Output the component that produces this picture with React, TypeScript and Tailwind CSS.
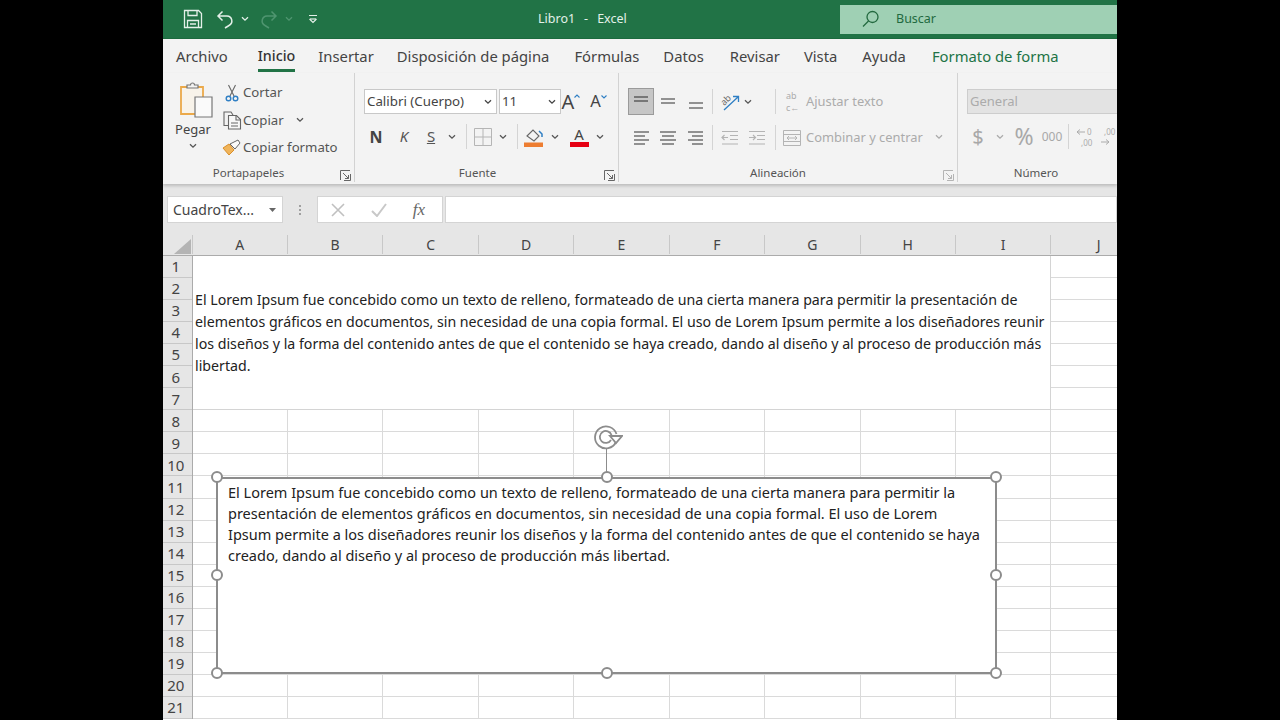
import type { ReactNode } from 'react'

const Chev = ({ c = '#555' }: { c?: string }) => (
  <svg width="8" height="6" viewBox="0 0 8 6" fill="none" stroke={c} strokeWidth="1.3" className="shrink-0"><path d="M1 1.2l3 3 3-3" /></svg>
)

// fixed width cell inside a ribbon row
const Slot = ({ w, children, className = '' }: { w: number; children?: ReactNode; className?: string }) => (
  <div style={{ width: w }} className={`flex shrink-0 items-center justify-center ${className}`}>{children}</div>
)

const Sep = () => <div className="h-[25px] w-px shrink-0 bg-[#d4d4d4]" />

const Launcher = ({ c = '#666' }: { c?: string }) => (
  <svg width="11" height="11" viewBox="0 0 11 11" fill="none" stroke={c}>
    <path d="M.5 10V.5H10" /><path d="M3 3l5.5 5.5M8.5 5v3.5H5" /><path d="M10.5 4v6.5H4" />
  </svg>
)

const Lines = ({ rows, c = '#666' }: { rows: [number, number, number][]; c?: string }) => (
  <svg width="18" height="18" viewBox="0 0 18 18" stroke={c} strokeWidth="1.4">
    {rows.map(([y, a, b]) => <path key={y} d={`M${a} ${y}H${b}`} />)}
  </svg>
)

const Indent = ({ flip }: { flip?: boolean }) => (
  <svg width="18" height="16" viewBox="0 0 18 16" fill="none" stroke="#b4b4b4" strokeWidth="1.2">
    <path d="M1 1.5h16M9 5.5h8M9 9.5h8M1 14h16" />
    {flip ? <path d="M1 7.5h6M5 5l2.5 2.5L5 10" /> : <path d="M7 7.5H1M3.5 5L1 7.5 3.5 10" />}
  </svg>
)

const tabs: [string, number, string?][] = [
  ['Archivo', 13], ['Inicio', 30], ['Insertar', 23], ['Disposición de página', 23], ['Fórmulas', 25],
  ['Datos', 24], ['Revisar', 26], ['Vista', 24], ['Ayuda', 25], ['Formato de forma', 26, 'text-[#217346]'],
]

const sheetText = [
  'El Lorem Ipsum fue concebido como un texto de relleno, formateado de una cierta manera para permitir la presentación de',
  'elementos gráficos en documentos, sin necesidad de una copia formal. El uso de Lorem Ipsum permite a los diseñadores reunir',
  'los diseños y la forma del contenido antes de que el contenido se haya creado, dando al diseño y al proceso de producción más',
  'libertad.',
]

const boxText = [
  'El Lorem Ipsum fue concebido como un texto de relleno, formateado de una cierta manera para permitir la',
  'presentación de elementos gráficos en documentos, sin necesidad de una copia formal. El uso de Lorem',
  'Ipsum permite a los diseñadores reunir los diseños y la forma del contenido antes de que el contenido se haya',
  'creado, dando al diseño y al proceso de producción más libertad.',
]

const Handle = ({ className }: { className: string }) => (
  <div className={`absolute h-[12px] w-[12px] rounded-full border-2 border-[#8c8c8c] bg-white ${className}`} />
)

function TitleBar() {
  return (
    <div className="flex h-[39px] shrink-0 items-center border-b border-[#1c6a3e] bg-[#217346] text-white">
      <div className="flex w-[677px] shrink-0 items-center pl-[7px]">
        <Slot w={46}>
          <svg width="20" height="20" viewBox="0 0 20 20" fill="none" stroke="#e4f0e9" strokeWidth="1.3">
            <path d="M1.5 1.5h14l3 3v14h-17z" /><path d="M5 1.5v5h9v-5M4.5 18.500V11.500h11v7M7 15h6" />
          </svg>
        </Slot>
        <Slot w={18}>
          <svg width="18" height="19" viewBox="0 0 18 19" fill="none" stroke="#e4f0e9" strokeWidth="1.5">
            <path d="M6.5 1.5L2 6l4.500 4.500M2 6h9a5 5 0 0 1 2 9.500L9 18" />
          </svg>
        </Slot>
        <Slot w={22}><Chev c="#e4f0e9" /></Slot>
        <Slot w={26}>
          <svg width="18" height="19" viewBox="0 0 18 19" fill="none" stroke="#4f9570" strokeWidth="1.5">
            <path d="M11.500 1.500L16 6l-4.500 4.500M16 6H7a5 5 0 0 0-2 9.500L9 18" />
          </svg>
        </Slot>
        <Slot w={14}><Chev c="#4f9570" /></Slot>
        <Slot w={34}>
          <svg width="10" height="10" viewBox="0 0 10 10" fill="none" stroke="#e4f0e9" strokeWidth="1.2">
            <path d="M1 1.5h8M1.500 5L5 8.500 8.500 5" /><path d="M2 5h6" />
          </svg>
        </Slot>
        <div className="pl-[208px] text-[12.5px] text-[#e3f1e9]">
          <span>Libro1</span><span className="ml-[9px]">-</span><span className="ml-[9px]">Excel</span>
        </div>
      </div>
      <div className="flex h-[29px] flex-1 items-center bg-[#9fd0b4] text-[#1f6a40]">
        <svg width="18" height="18" viewBox="0 0 18 18" fill="none" stroke="#23693f" strokeWidth="1.3" className="ml-[22px]">
          <circle cx="10.5" cy="7" r="5.5" /><path d="M6.500 11L1 16.500" />
        </svg>
        <span className="ml-[16px] text-[12.5px]">Buscar</span>
      </div>
    </div>
  )
}

function Tabs() {
  return (
    <div className="flex h-[34px] shrink-0 items-start bg-[#f3f3f3] text-[14.8px] text-[#444]">
      {tabs.map(([name, gap, color]) => (
        <div key={name} style={{ marginLeft: gap }} className={`relative mt-[6px] leading-[22px] ${color ?? ''} ${name === 'Inicio' ? 'text-[14.3px] font-medium text-[#333]' : ''}`}>
          {name}
          {name === 'Inicio' && <div className="absolute right-0 bottom-[-5px] left-0 h-[3px] bg-[#217346]" />}
        </div>
      ))}
    </div>
  )
}

function Group({ w, label, labelPad = 0, launcher, children }: { w: number; label: string; labelPad?: number; launcher?: string; children: ReactNode }) {
  return (
    <div style={{ width: w }} className="relative mb-[2px] flex shrink-0 flex-col border-r border-[#d2d2d2] last:border-r-0">
      <div className="h-[92px]">{children}</div>
      <div style={{ paddingRight: labelPad }} className="mt-[1px] text-center text-[11.5px] leading-[18px] text-[#555]">{label}</div>
      {launcher && <div className="absolute right-[3px] bottom-[1px]"><Launcher c={launcher} /></div>}
    </div>
  )
}

function Clipboard() {
  return (
    <Group w={192} label="Portapapeles" labelPad={20} launcher="#666">
      <div className="flex pt-[9px]">
        <div className="ml-[11px] flex w-[38px] flex-col items-center">
          <svg width="34" height="36" viewBox="0 0 34 36" fill="none" className="ml-[6px]">
            <path d="M2 5h22v27H2z" fill="#f8f3ea" stroke="#eba94a" strokeWidth="1.8" />
            <path d="M8 6V3h3.500a2 2 0 0 1 4 0H19v3z" fill="#f3f3f3" stroke="#777" strokeWidth="1.2" />
            <path d="M16 15h17v20H16z" fill="#fafafa" stroke="#777" strokeWidth="1.2" />
          </svg>
          <div className="mt-[2px] text-[13px] leading-[18px] text-[#444]">Pegar</div>
          <div className="mt-[5px]"><Chev /></div>
        </div>
        <div className="mt-[-3px] ml-[9px] flex flex-col text-[13.2px] leading-[27.5px] text-[#555]">
          <div className="flex items-center">
            <Slot w={22}>
              <svg width="14" height="18" viewBox="0 0 14 18" fill="none">
                <path d="M3.500 1L9 12M10.500 1L5 12" stroke="#666" strokeWidth="1.1" />
                <circle cx="3.5" cy="14.5" r="2.3" stroke="#2f7fc4" strokeWidth="1.4" />
                <circle cx="10.5" cy="14.5" r="2.3" stroke="#2f7fc4" strokeWidth="1.4" />
              </svg>
            </Slot>
            <span>Cortar</span>
          </div>
          <div className="flex items-center">
            <Slot w={22}>
              <svg width="19" height="19" viewBox="0 0 19 19" fill="none" stroke="#666" strokeWidth="1.1">
                <path d="M5 14.500H1V1h7l2 3" /><path d="M5.500 4.500h8l4 4V18h-12z" fill="#f8f8f8" /><path d="M13 4.500V9h4.500M8 12h7M8 15h7" />
              </svg>
            </Slot>
            <span>Copiar</span>
            <span className="ml-[12px]"><Chev /></span>
          </div>
          <div className="flex items-center">
            <Slot w={22}>
              <svg width="20" height="18" viewBox="0 0 20 18" fill="none">
                <path d="M1 9l6 7 5-5-5-6z" fill="#f0b45a" stroke="#d98f2a" />
                <path d="M8 5l5 5 5-6-2-3z" fill="#fafafa" stroke="#666" />
              </svg>
            </Slot>
            <span>Copiar formato</span>
          </div>
        </div>
      </div>
    </Group>
  )
}

function FontGroup() {
  return (
    <Group w={264} label="Fuente" labelPad={18} launcher="#666">
      <div className="mt-[16px] flex h-[25px] items-center pl-[9px]">
        <div className="flex h-[25px] w-[133px] items-center justify-between border border-[#c8c8c8] bg-white pr-[4px] pl-[2px] text-[13.3px] text-[#444]">
          Calibri (Cuerpo)<Chev c="#444" />
        </div>
        <div className="ml-[2px] flex h-[25px] w-[62px] items-center justify-between border border-[#c8c8c8] bg-white pr-[4px] pl-[2px] text-[13.3px] text-[#444]">
          11<Chev c="#444" />
        </div>
        <Slot w={20}>
          <span className="text-[20px] leading-none text-[#444]">A</span>
          <svg width="6" height="4" viewBox="0 0 6 4" fill="none" stroke="#2f7fc4" strokeWidth="1.1" className="mb-[11px] shrink-0"><path d="M.5 3.500L3 1l2.500 2.500" /></svg>
        </Slot>
        <Slot w={19} className="ml-[8px]">
          <span className="text-[16.5px] leading-none text-[#444]">A</span>
          <svg width="6" height="4" viewBox="0 0 6 4" fill="none" stroke="#2f7fc4" strokeWidth="1.1" className="mb-[10px] shrink-0"><path d="M.5.500L3 3 5.500.500" /></svg>
        </Slot>
      </div>
      <div className="mt-[10px] flex h-[25px] items-center pl-[7px]">
        <Slot w={28} className="text-[16px] font-bold text-[#444]">N</Slot>
        <Slot w={28} className="text-[15px] text-[#555] italic">K</Slot>
        <Slot w={26} className="text-[15px] text-[#555] underline">S</Slot>
        <Slot w={16}><Chev /></Slot>
        <Slot w={12}><Sep /></Slot>
        <Slot w={22}>
          <svg width="18" height="18" viewBox="0 0 18 18" fill="none" stroke="#b5b5b5"><path d="M.5.500h17v17H.5zM9 .500v17M.5 9h17" /></svg>
        </Slot>
        <Slot w={18}><Chev /></Slot>
        <Slot w={10}><Sep /></Slot>
        <Slot w={24}>
          <svg width="20" height="20" viewBox="0 0 20 20" fill="none">
            <path d="M3 9l6-6 6 6-5 5z" stroke="#666" strokeWidth="1.1" /><path d="M15 4l3 3v3" stroke="#2f7fc4" strokeWidth="1.5" />
            <path d="M0 15.500h19V20H0z" fill="#ed7d31" />
          </svg>
        </Slot>
        <Slot w={18}><Chev /></Slot>
        <Slot w={30}>
          <div className="flex flex-col items-center">
            <span className="text-[15px] leading-[15px] text-[#444]">A</span>
            <div className="h-[5px] w-[19px] bg-[#e60012]" />
          </div>
        </Slot>
        <Slot w={12}><Chev /></Slot>
      </div>
    </Group>
  )
}

function AlignGroup() {
  return (
    <Group w={339} label="Alineación" labelPad={20} launcher="#b4b4b4">
      <div className="mt-[15px] flex h-[27px] items-center pl-[9px]">
        <Slot w={26} className="h-[27px] border border-[#9a9a9a] bg-[#c6c6c6]">
          <Lines rows={[[4, 2, 16], [8, 2, 16]]} c="#555" />
        </Slot>
        <Slot w={28}><Lines rows={[[6, 2, 16], [10, 2, 16]]} /></Slot>
        <Slot w={28}><Lines rows={[[10, 2, 16], [15, 2, 16]]} /></Slot>
        <Slot w={4}><Sep /></Slot>
        <Slot w={30}>
          <svg width="21" height="21" viewBox="0 0 21 21" fill="none" className="overflow-visible">
            <text x="1" y="11" fontSize="9" fill="#666" fontFamily="Noto Sans" transform="rotate(-45 8 8)">ab</text>
            <path d="M5 19L19 6M14 5.500h5.500V11" stroke="#2f7fc4" strokeWidth="1.3" />
          </svg>
        </Slot>
        <Slot w={8}><Chev /></Slot>
        <Slot w={2} className="ml-[22px]"><Sep /></Slot>
        <div className="ml-[10px] flex items-center text-[12.9px] text-[#ababab]">
          <div className="w-[20px] text-[9px] leading-[12px]">ab<br />c←</div>
          <span>Ajustar texto</span>
        </div>
      </div>
      <div className="mt-[10px] flex h-[25px] items-center pl-[9px]">
        <Slot w={26}><Lines rows={[[3, 2, 17], [7, 2, 13], [11, 2, 17], [15, 2, 13]]} /></Slot>
        <Slot w={28}><Lines rows={[[3, 1, 17], [7, 3, 15], [11, 1, 17], [15, 3, 15]]} /></Slot>
        <Slot w={28}><Lines rows={[[3, 1, 16], [7, 5, 16], [11, 1, 16], [15, 5, 16]]} /></Slot>
        <Slot w={4}><Sep /></Slot>
        <Slot w={32}><Indent /></Slot>
        <Slot w={22}><Indent flip /></Slot>
        <Slot w={2} className="ml-[6px]"><Sep /></Slot>
        <Slot w={18} className="ml-[7px]">
          <svg width="18" height="18" viewBox="0 0 18 18" fill="none" stroke="#b4b4b4"><path d="M.5 1.500h17v15H.5zM.5 5.500h17M.5 12.500h17M4 9h10M6 7L4 9l2 2M12 7l2 2-2 2" /></svg>
        </Slot>
        <div className="ml-[5px] flex items-center text-[12.9px] text-[#ababab]">
          Combinar y centrar<span className="ml-[12px]"><Chev c="#ababab" /></span>
        </div>
      </div>
    </Group>
  )
}

function NumberGroup() {
  return (
    <Group w={160} label="Número" labelPad={4}>
      <div className="mt-[16px] ml-[9px] flex h-[25px] w-[170px] items-center border border-[#cdcdcd] bg-[#e3e3e3] pl-[2px] text-[13px] text-[#ababab]">General</div>
      <div className="mt-[10px] flex h-[25px] items-center text-[#a8a8a8]">
        <Slot w={40} className="text-[20px]">$</Slot>
        <Slot w={4}><Chev c="#ababab" /></Slot>
        <Slot w={44} className="text-[23px]">%</Slot>
        <Slot w={12} className="text-[12px]">000</Slot>
        <Slot w={20}><Sep /></Slot>
        <Slot w={16}>
          <svg width="20" height="20" viewBox="0 0 20 20" fill="none" stroke="#ababab" className="shrink-0 overflow-visible"><path d="M9 5H1M4 2.500L1 5l3 2.500" /><text x="11" y="8" fontSize="8" stroke="none" fill="#ababab">0</text><text x="5" y="19" fontSize="8" stroke="none" fill="#ababab">,00</text></svg>
        </Slot>
        <Slot w={32}>
          <svg width="20" height="20" viewBox="0 0 20 20" fill="none" stroke="#ababab" className="shrink-0"><path d="M1 15h8M6 12.500L9 15l-3 2.500" /><text x="4" y="8" fontSize="8" stroke="none" fill="#ababab">,00</text></svg>
        </Slot>
      </div>
    </Group>
  )
}

function FormulaBar() {
  return (
    <div className="flex h-[51px] shrink-0 items-start bg-[#e6e6e6] pt-[12px]">
      <div className="ml-[4px] flex h-[27px] w-[116px] items-center justify-between border border-[#d4d4d4] bg-white pr-[6px] pl-[5px] text-[14px] text-[#444]">
        CuadroTex...
        <svg width="7" height="4" viewBox="0 0 7 4" fill="#666"><path d="M0 0h7L3.500 4z" /></svg>
      </div>
      <div className="flex h-[27px] w-[34px] flex-col items-center justify-center gap-[2px]">
        <i className="h-[2px] w-[2px] bg-[#a0a0a0]" /><i className="h-[2px] w-[2px] bg-[#a0a0a0]" /><i className="h-[2px] w-[2px] bg-[#a0a0a0]" />
      </div>
      <div className="flex h-[27px] w-[126px] items-center border border-[#d4d4d4] bg-white">
        <Slot w={40}>
          <svg width="14" height="14" viewBox="0 0 14 14" stroke="#c0c0c0" strokeWidth="1.6"><path d="M1 1l12 12M13 1L1 13" /></svg>
        </Slot>
        <Slot w={42}>
          <svg width="16" height="14" viewBox="0 0 16 14" fill="none" stroke="#c8c8c8" strokeWidth="2"><path d="M1 8l5 5 9-12" /></svg>
        </Slot>
        <Slot w={38} className="font-['Liberation_Serif',serif] text-[17px] text-[#666] italic">fx</Slot>
      </div>
      <div className="ml-[2px] h-[27px] flex-1 border border-[#d4d4d4] bg-white" />
    </div>
  )
}

function Sheet() {
  const cols = ['A', 'B', 'C', 'D', 'E', 'F', 'G', 'H', 'I', 'J']
  const rows = Array.from({ length: 21 }, (_, i) => i + 1)
  const cellCount = 10 * 21 - 63
  return (
    <div className="relative flex-1 overflow-hidden bg-white">
      <div className="flex h-[21px] border-b border-[#ababab] bg-[#e6e6e6] pb-[1px] text-[14px] text-[#444]">
        <div className="relative w-[29.5px] shrink-0 border-r border-[#c8c8c8]">
          <svg width="17" height="15" viewBox="0 0 17 15" fill="#b4b4b4" className="absolute right-[1px] bottom-0"><path d="M17 0v15H0z" /></svg>
        </div>
        {cols.map(c => (
          <div key={c} className="flex w-[95.45px] shrink-0 items-center justify-center border-r border-[#c8c8c8]">{c}</div>
        ))}
      </div>
      <div className="flex">
        <div className="w-[29.5px] shrink-0 border-r border-[#ababab] bg-[#e6e6e6]">
          {rows.map(r => (
            <div key={r} className="flex h-[22.05px] items-center justify-center border-b border-[#c8c8c8] pr-[3px] text-[15px] text-[#444]">{r}</div>
          ))}
        </div>
        <div className="grid auto-rows-[22.05px] grid-cols-[repeat(10,95.45px)]">
          <div className="col-span-9 row-span-7 flex flex-col justify-center border-r border-b border-[#d4d4d4] pl-[2.5px] text-[14.2px] leading-[22px] whitespace-nowrap text-[#222]">
            {sheetText.map(l => <div key={l}>{l}</div>)}
          </div>
          {Array.from({ length: cellCount }, (_, i) => (
            <div key={i} className="border-r border-b border-[#dadada]" />
          ))}
        </div>
      </div>

      {/* Text box selected over the sheet */}
      <div className="absolute top-[242px] left-[53px] h-[197px] w-[781px] border-2 border-[#8c8c8c] bg-white pt-[3px] pl-[10px] text-[14.5px] leading-[21px] whitespace-nowrap text-[#222]">
        {boxText.map(l => <div key={l}>{l}</div>)}
      </div>
      <Handle className="top-[236px] left-[48px]" />
      <Handle className="top-[236px] left-[438px]" />
      <Handle className="top-[236px] left-[827px]" />
      <Handle className="top-[334px] left-[48px]" />
      <Handle className="top-[334px] left-[827px]" />
      <Handle className="top-[432px] left-[48px]" />
      <Handle className="top-[432px] left-[438px]" />
      <Handle className="top-[432px] left-[827px]" />
      <div className="absolute top-[214px] left-[443px] h-[23px] w-px bg-[#8c8c8c]" />
      <svg width="30" height="26" viewBox="0 0 30 26" fill="none" stroke="#8c8c8c" strokeWidth="1.8" className="absolute top-[190px] left-[430px]">
        <path d="M23 17a11 11 0 1 1 .500-8" /><path d="M18 15a6 6 0 1 1 .500-5" /><path d="M17 11h12l-6 7z" fill="#fff" />
      </svg>
    </div>
  )
}

export default function App() {
  return (
    <div className="flex h-[720px] w-[1280px] overflow-hidden bg-black font-['Noto_Sans','Open_Sans',sans-serif]">
      <div className="ml-[163px] flex h-full w-[954px] flex-col overflow-hidden bg-white">
        <TitleBar />
        <Tabs />
        <div className="relative z-10 flex h-[111px] shrink-0 overflow-hidden bg-[#f3f3f3] shadow-[0_2px_3px_rgba(0,0,0,0.18)]">
          <Clipboard />
          <FontGroup />
          <AlignGroup />
          <NumberGroup />
        </div>
        <FormulaBar />
        <Sheet />
      </div>
    </div>
  )
}
